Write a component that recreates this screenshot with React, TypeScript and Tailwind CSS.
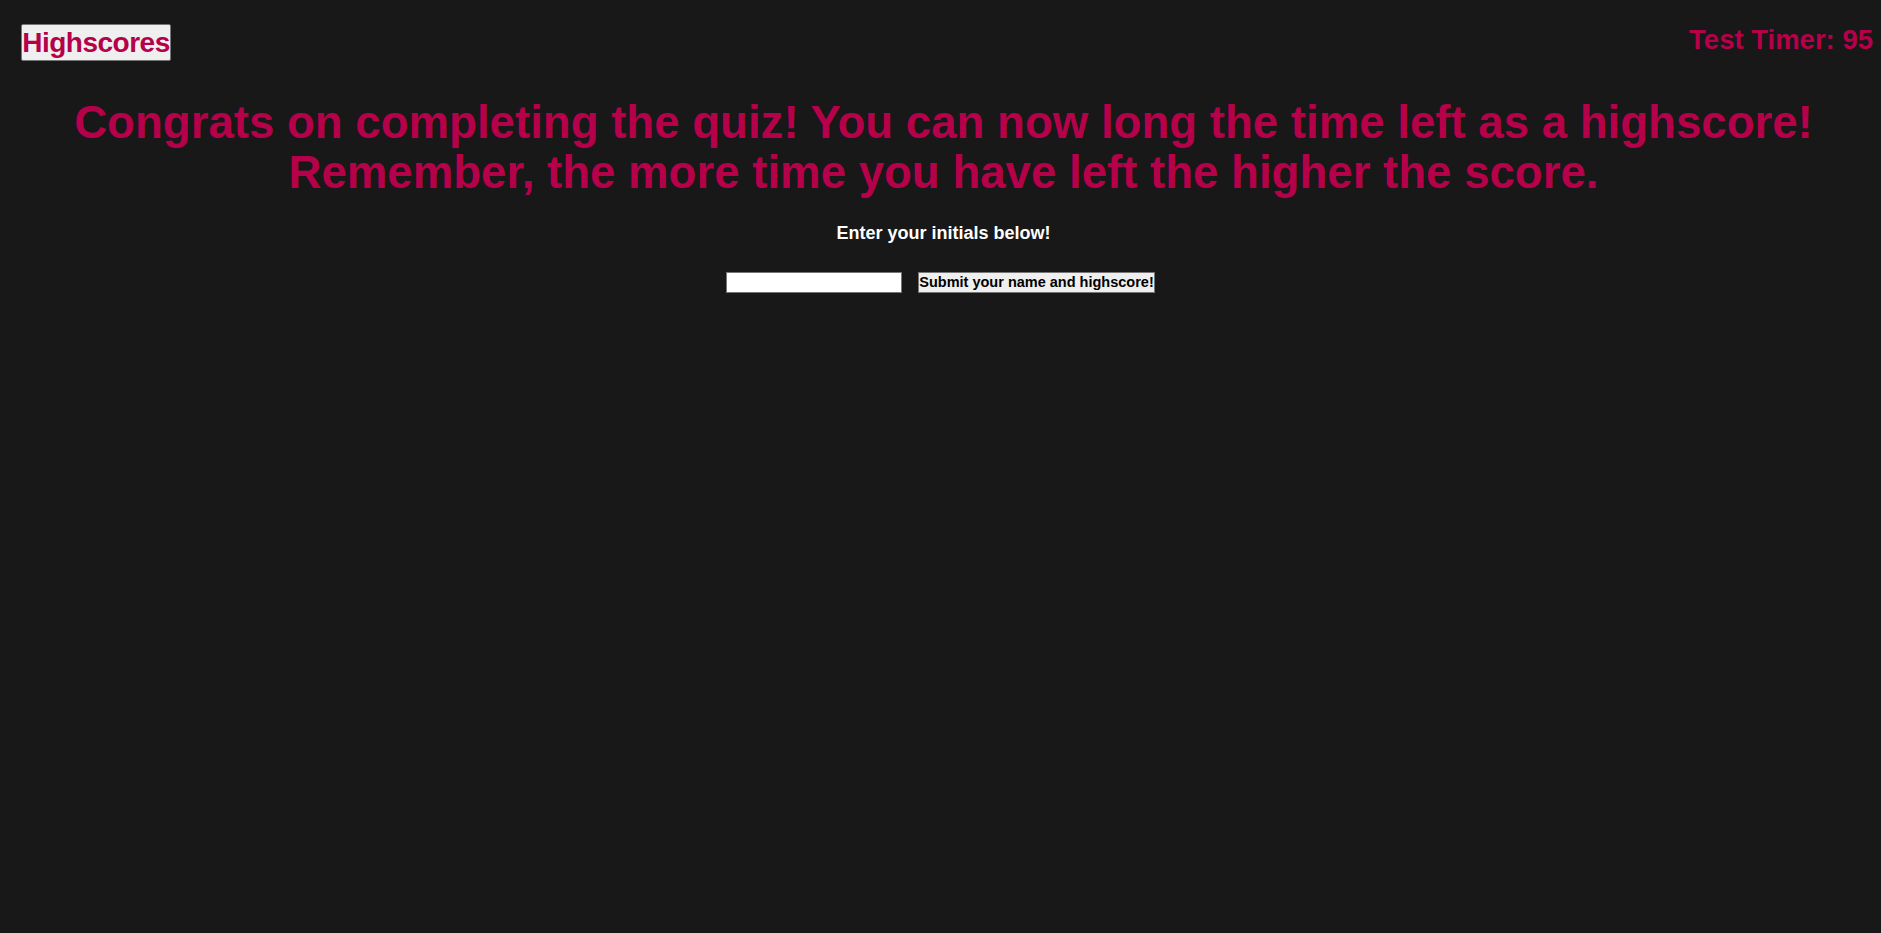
import React from "react";

export default function App() {
  return (
    <div className="min-h-[933px] w-full overflow-x-hidden bg-[#181818]" style={{ fontFamily: '"Liberation Sans", Arial, sans-serif' }}>
      <div className="flex items-start justify-between pl-[21px] pr-[8px] pt-[24px]">
        <button className="flex h-[37px] w-[150px] items-center justify-center rounded-[2px] border border-[#767676] bg-[#efefef] px-0 text-[28px] font-bold leading-none tracking-[-0.5px] text-[#b5004a]">
          Highscores
        </button>
        <div className="mt-[2px] text-[27.5px] font-bold leading-none text-[#b5004a]">Test Timer: 95</div>
      </div>
      <h1 className="mt-[37px] pl-[6px] text-center text-[45.6px] font-bold leading-[50px] text-[#b5004a]">
        Congrats on completing the quiz! You can now long the time left as a highscore!
        <br />
        Remember, the more time you have left the higher the score.
      </h1>
      <p className="mt-[26px] pl-[6px] text-center text-[18px] font-bold leading-none text-white">Enter your initials below!</p>
      <div className="mt-[30px] flex items-center justify-center gap-[16px]">
        <input className="h-[21px] w-[176px] border border-[#767676] bg-white" />
        <button className="flex h-[21px] w-[237px] items-center justify-center border border-[#767676] bg-[#efefef] px-0 text-[14.5px] font-bold leading-none text-black">
          Submit your name and highscore!
        </button>
      </div>
    </div>
  );
}
